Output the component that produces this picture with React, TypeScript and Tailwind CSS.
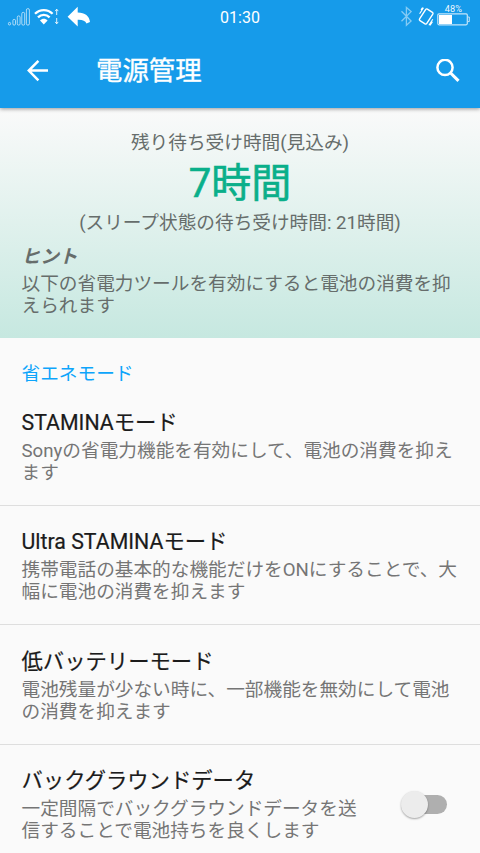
import React from 'react';

interface PowerMode {
    title: string;
    lines: string[];
    hasSwitch?: boolean;
}

const MODES: PowerMode[] = [
    { title: 'STAMINAモード', lines: ['Sonyの省電力機能を有効にして、電池の消費を抑え', 'ます'] },
    { title: 'Ultra STAMINAモード', lines: ['携帯電話の基本的な機能だけをONにすることで、大', '幅に電池の消費を抑えます'] },
    { title: '低バッテリーモード', lines: ['電池残量が少ない時に、一部機能を無効にして電池', 'の消費を抑えます'] },
    { title: 'バックグラウンドデータ', lines: ['一定間隔でバックグラウンドデータを送', '信することで電池持ちを良くします'], hasSwitch: true },
];

const StatusBar: React.FC = () => (
    <div className="flex h-[34px] items-start justify-between">
        <svg className="h-[34px] w-[100px]" viewBox="0 0 100 34" fill="none">
            <g stroke="#fff" strokeOpacity="0.7" strokeWidth="0.9">
                <rect x="8.4" y="22.4" width="2.2" height="2.6" rx="1.1" />
                <rect x="12.9" y="19.4" width="2.6" height="5.7" rx="1.2" />
                <rect x="17.3" y="15.9" width="2.8" height="9.2" rx="1.3" />
                <rect x="21.8" y="12.4" width="2.9" height="12.7" rx="1.3" />
                <rect x="26.4" y="8.6" width="3" height="16.5" rx="1.4" />
            </g>
            <g stroke="#fff" strokeWidth="2.3">
                <path d="M35 13.8C40 8.9 47.6 8.9 52.6 13.8" />
                <path d="M38 17.4C41.3 14.1 46.3 14.1 49.6 17.4" />
            </g>
            <path d="M40 20.4c2.2-2.1 5.4-2.1 7.6 0L43.8 24.4z" fill="#fff" />
            <path d="M56.7 15V9.3M55.2 11.1l1.5-1.9 1.5 1.9M56.7 18v5.8M55.2 21.9l1.5 1.9 1.5-1.9" stroke="#fff" strokeOpacity="0.85" strokeWidth="1" />
            <path d="M67.6 16.7L77.7 6.7v5.9c7.3 0 11.8 3.8 12.3 9.4l-3.5 1.4c-1.2-2.7-4.1-3.8-8.8-3.6v6.8z" fill="#fff" />
        </svg>
        <span className="mt-[6px] text-base leading-6 font-normal">01:30</span>
        <svg className="h-[34px] w-[100px]" viewBox="0 0 100 34" fill="none">
            <path d="M21.5 11.3l9.6 9.7-4.7 4.3V7.5l4.7 4.1-9.6 9.6" stroke="#fff" strokeOpacity="0.48" strokeWidth="1.3" />
            <rect x="-4.3" y="-6.8" width="8.6" height="13.6" rx="1.3" transform="translate(46.2 16.5) rotate(33)" stroke="#fff" strokeWidth="1.4" />
            <path d="M39.6 13.8l3.9-6M41 9.9l1.6-2.4M48.9 25.2l3.9-6M50 25.4l2.5-3.7" stroke="#fff" strokeWidth="1.1" />
            <rect x="57.8" y="13.8" width="29.5" height="11" rx="1.2" stroke="#fff" strokeOpacity="0.75" strokeWidth="1.2" />
            <path d="M88 17h1.3v4.6H88" stroke="#fff" strokeOpacity="0.7" strokeWidth="1" />
            <path d="M59 15h13v9H59z" fill="#fff" />
            <text x="73.4" y="12.4" textAnchor="middle" fill="#fff" fillOpacity="0.95" fontSize="9.2">48%</text>
        </svg>
    </div>
);

const AppBar: React.FC = () => (
    <div className="flex h-[74px] items-center pr-5 pl-[27px]">
        <svg className="h-[22px] w-[22px] shrink-0" viewBox="0 0 22 22" fill="none">
            <path d="M21 10.6H2M11.4.9L1.8 10.6l9.6 9.7" stroke="#fff" strokeWidth="2.5" />
        </svg>
        <h1 className="ml-[47px] flex-1 text-[26.4px] leading-8 font-normal [-webkit-text-stroke:0.4px]">電源管理</h1>
        <svg className="h-6 w-6 shrink-0" viewBox="0 0 24 24" fill="none">
            <circle cx="9" cy="8.4" r="7.6" stroke="#fff" strokeWidth="2.5" />
            <path d="M14.6 14l7.9 7.9" stroke="#fff" strokeWidth="3.1" />
        </svg>
    </div>
);

const BatterySummary: React.FC = () => (
    <section className="h-[230px] bg-linear-to-b from-[#fafafa] to-[#c6e8e0] pt-6 text-[18.67px] leading-[22px] text-[#666d6b]">
        <div className="text-center">
            <p>残り待ち受け時間(見込み)</p>
            <p className="mt-[7px] mb-[5px] text-[40px] leading-[46px] text-[#0aaf8a] [-webkit-text-stroke:0.6px]">7時間</p>
            <p>(スリープ状態の待ち受け時間: 21時間)</p>
        </div>
        <div className="mt-3 pl-[21.5px]">
            <p className="font-bold italic">ヒント</p>
            <p className="mt-[5px]">
                以下の省電力ツールを有効にすると電池の消費を抑<br />えられます
            </p>
        </div>
    </section>
);

const Switch: React.FC = () => (
    <div className="mr-[33px] flex h-7 w-[46px] items-center">
        <div className="z-10 h-[27px] w-[27px] rounded-full bg-[#ececec] shadow-[0_1px_2px_rgba(0,0,0,0.35)]"></div>
        <div className="-ml-[22px] h-[19px] w-[41px] rounded-full bg-[#afafaf]"></div>
    </div>
);

const ModeRow: React.FC<{ mode: PowerMode }> = ({ mode }) => (
    <li className="flex h-[119.5px] items-center justify-between border-b border-[#dedede] pt-[2px] pl-[21.5px]">
        <div>
            <h3 className="text-[21.33px] leading-7 text-[#1b1b1b] [-webkit-text-stroke:0.2px]">{mode.title}</h3>
            <p className="mt-[3px] text-[18.67px] leading-[22px] whitespace-nowrap text-[#757575]">
                {mode.lines[0]}<br />{mode.lines[1]}
            </p>
        </div>
        {mode.hasSwitch && <Switch />}
    </li>
);

export default function App() {
    return (
        <div className="h-[853px] w-[480px] overflow-hidden bg-[#fafafa] font-['Roboto','Noto_Sans_CJK_JP',sans-serif]" lang="ja">
            <header className="relative z-10 h-[108px] bg-[#169bea] text-white shadow-[0_1px_4px_rgba(0,0,0,0.4)]">
                <StatusBar />
                <AppBar />
            </header>
            <BatterySummary />
            <h2 className="h-12 px-[21.5px] pt-[25px] text-[18.67px] leading-[22px] text-[#0da5fb]">省エネモード</h2>
            <ul>
                {MODES.map(mode => <ModeRow key={mode.title} mode={mode} />)}
            </ul>
        </div>
    );
}
